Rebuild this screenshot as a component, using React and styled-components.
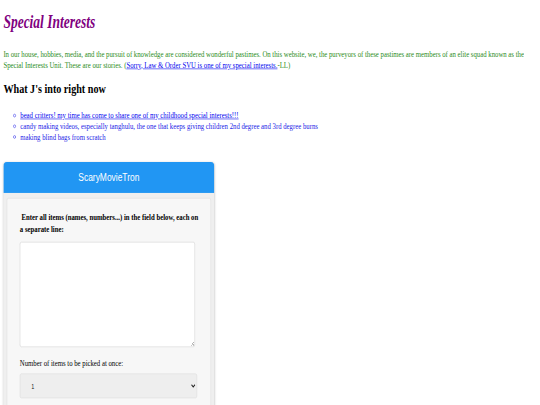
import React from 'react';
import styled, { createGlobalStyle } from 'styled-components';

// the reference is a 1280x720 page squeezed into 540x405, so the page is
// laid out at full size and the frame is scaled down unevenly
const GlobalStyle = createGlobalStyle`
  html, body {
    margin: 0;
    overflow: hidden;
    background: #fff;
  }
`;

const Frame = styled.div`
  display: flow-root;
  width: 1280px;
  box-sizing: border-box;
  padding: 0 8px 40px;
  transform: scale(0.421875, 0.5625);
  transform-origin: 0 0;
  font-family: 'Liberation Serif', 'Times New Roman', serif;
  font-size: 16px;
  color: #000;
`;

const Title = styled.h1`
  font-size: 32px;
  font-style: italic;
  font-weight: bold;
  color: #800080;
  margin: 21px 0 29px;
`;

const Intro = styled.p`
  color: #2a8c22;
  line-height: 19px;
  margin: 0 0 16px;
`;

const Anchor = styled.a`
  color: #0000ee;
  text-decoration: underline;
`;

const Heading = styled.h2`
  font-size: 24px;
  font-weight: bold;
  margin: 20px 0 23px;
`;

const Interests = styled.ul`
  list-style: circle;
  padding-left: 40px;
  margin: 0 0 36px;
  color: #1a1ae6;
  line-height: 19px;
`;

const Card = styled.section`
  width: 500px;
  border-radius: 8px 8px 4px 4px;
  background: #efefef;
  box-shadow: 0 0 4px rgba(0, 0, 0, 0.18);
  overflow: hidden;
`;

const CardHeader = styled.header`
  height: 55px;
  display: flex;
  align-items: center;
  justify-content: center;
  background: #2196f3;
  color: #fff;
  font-family: 'Liberation Sans', Arial, sans-serif;
  font-size: 20px;
`;

const CardBody = styled.div`
  padding: 9px 8px 8px;
`;

const Panel = styled.div`
  display: flex;
  flex-direction: column;
  background: #f7f7f7;
  border: 1px solid #dcdcdc;
  border-radius: 4px;
  padding: 22px 18px 30px 30px;
`;

const Label = styled.label`
  display: block;
  font-weight: ${(p) => (p.$strong ? 'bold' : 'normal')};
  line-height: ${(p) => (p.$strong ? '21px' : '19px')};
  margin-bottom: ${(p) => (p.$strong ? '13px' : '9px')};
  white-space: pre-wrap;
`;

const Items = styled.textarea`
  display: block;
  width: 415px;
  height: 187px;
  box-sizing: border-box;
  border: 1px solid #cfcfcf;
  border-radius: 4px;
  background: #fff;
  margin: 0 0 19px;
  resize: vertical;
`;

const Picker = styled.select`
  width: 420px;
  height: 44px;
  box-sizing: border-box;
  padding: 0 22px;
  border: 1px solid #d8d8d8;
  border-radius: 4px;
  background: #eeeeee;
  color: #222;
  font-family: 'Liberation Sans', Arial, sans-serif;
  font-size: 13px;
`;

export default function App() {
  return (
    <>
      <GlobalStyle />
      <Frame>
        <Title>Special Interests</Title>
        <Intro>
          In our house, hobbies, media, and the pursuit of knowledge are considered wonderful
          pastimes. On this website, we, the purveyors of these pastimes are members of an elite
          squad known as the Special Interests Unit. These are our stories. (<Anchor href="#svu">Sorry, Law &amp; Order SVU is one of my special interests.</Anchor>-LL)
        </Intro>
        <Heading>What J's into right now</Heading>
        <Interests>
          <li>
            <Anchor href="#bead-critters">
              bead critters! my time has come to share one of my childhood special interests!!!
            </Anchor>
          </li>
          <li>
            candy making videos, especially tanghulu, the one that keeps giving children 2nd
            degree and 3rd degree burns
          </li>
          <li>making blind bags from scratch</li>
        </Interests>
        <Card>
          <CardHeader>ScaryMovieTron</CardHeader>
          <CardBody>
            <Panel>
              <Label $strong htmlFor="items">
                {' Enter all items (names, numbers...) in the field below, each on a separate line:'}
              </Label>
              <Items id="items" />
              <Label htmlFor="count">Number of items to be picked at once:</Label>
              <Picker id="count" defaultValue="1">
                <option value="1">1</option>
                <option value="2">2</option>
                <option value="3">3</option>
              </Picker>
            </Panel>
          </CardBody>
        </Card>
      </Frame>
    </>
  );
}
